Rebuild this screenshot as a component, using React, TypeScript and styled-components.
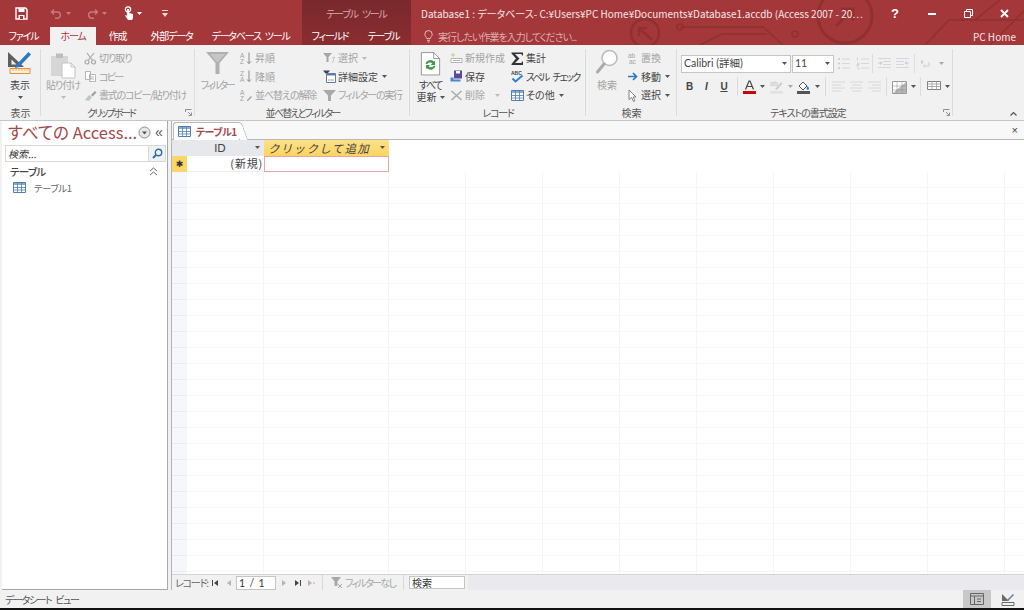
import React from "react";
import styled, { createGlobalStyle } from "styled-components";

const GlobalStyle = createGlobalStyle`
  html, body { margin: 0; padding: 0; background: #f1f1f1; }
  body {
    font-family: "Noto Sans CJK JP", "Noto Sans", sans-serif;
    font-feature-settings: "palt";
  }
`;

const Page = styled.div`
  width: 1024px;
  height: 610px;
  display: flex;
  flex-direction: column;
  overflow: hidden;
  background: #f1f1f1;
`;

/* ---------- title bar ---------- */

const TitleBar = styled.header`
  position: relative;
  height: 45px;
  flex: none;
  display: flex;
  background: #a4373a;
  color: #fff;
  overflow: hidden;
`;

const TitleArt = styled.svg`
  position: absolute;
  left: 0;
  top: 0;
  pointer-events: none;
`;

const TitleLeft = styled.div`
  position: relative;
  width: 302px;
  flex: none;
  display: flex;
  flex-direction: column;
`;

const Qat = styled.div`
  height: 27px;
  display: flex;
  align-items: center;
  padding-left: 15px;
`;

const QatSlot = styled.div<{ $w: number }>`
  width: ${(p) => p.$w}px;
  display: flex;
  align-items: center;
`;

const TabRow = styled.nav`
  height: 18px;
  display: flex;
`;

const Tab = styled.div<{ $w: number; $active?: boolean }>`
  width: ${(p) => p.$w}px;
  display: flex;
  align-items: center;
  justify-content: center;
  font-size: 10px;
  letter-spacing: -1.2px;
  word-spacing: 3px;
  line-height: 1;
  white-space: nowrap;
  color: ${(p) => (p.$active ? "#a4373a" : "#fff")};
  background: ${(p) => (p.$active ? "#f1f1f1" : "transparent")};
`;

const ContextGroup = styled.div`
  position: relative;
  width: 109px;
  flex: none;
  display: flex;
  flex-direction: column;
  background: linear-gradient(#79292c, #8a2d30);
`;

const ContextTitle = styled.div`
  height: 27px;
  display: flex;
  align-items: center;
  justify-content: center;
  font-size: 10px;
  letter-spacing: -1.2px;
  word-spacing: 3px;
  color: #dba9aa;
`;

const ContextTabs = styled.div`
  height: 18px;
  display: flex;
  padding-left: 2px;
`;

const TitleRight = styled.div`
  position: relative;
  flex: 1;
  min-width: 0;
  display: flex;
  flex-direction: column;
`;

const CaptionRow = styled.div`
  height: 27px;
  display: flex;
  align-items: center;
  padding-left: 10px;
`;

const Caption = styled.div`
  width: 456px;
  flex: none;
  font-size: 10px;
  white-space: nowrap;
  color: #f6e6e6;
`;

const WindowButton = styled.div<{ $w: number }>`
  width: ${(p) => p.$w}px;
  flex: none;
  display: flex;
  justify-content: center;
  align-items: center;
`;

const TellRow = styled.div`
  height: 18px;
  display: flex;
  align-items: center;
  justify-content: space-between;
  padding: 0 8px 0 13px;
`;

const TellMe = styled.div`
  display: flex;
  align-items: center;
  gap: 5px;
  font-size: 10px;
  letter-spacing: -1px;
  color: #dcaeaf;
`;

const Account = styled.div`
  font-size: 10px;
  color: #f6e6e6;
`;

/* ---------- ribbon ---------- */

const Ribbon = styled.section`
  height: 76px;
  flex: none;
  display: flex;
  background: #f1f1f1;
  border-bottom: 1px solid #c6c6c6;
  box-sizing: border-box;
  color: #444;
  font-size: 10px;
  line-height: 1;
`;

const Group = styled.div<{ $w: number }>`
  position: relative;
  width: ${(p) => p.$w}px;
  flex: none;
  display: flex;
  flex-direction: column;
  box-sizing: border-box;
  padding-top: 4px;
  &::after {
    content: "";
    position: absolute;
    right: 0;
    top: 4px;
    bottom: 4px;
    width: 1px;
    background: #dcdcdc;
  }
`;

const GroupBody = styled.div<{ $pad?: number }>`
  height: 56px;
  display: flex;
  padding-left: ${(p) => p.$pad ?? 0}px;
`;

const GroupLabel = styled.div<{ $ls?: number; $pr?: number }>`
  height: 15px;
  display: flex;
  align-items: center;
  justify-content: center;
  padding-right: ${(p) => p.$pr ?? 0}px;
  font-size: 10px;
  letter-spacing: ${(p) => p.$ls ?? 0}px;
  color: #555;
`;

const Launcher = styled.svg`
  position: absolute;
  right: 3px;
  bottom: 4px;
`;

const BigButton = styled.div<{ $w: number; $off?: boolean }>`
  width: ${(p) => p.$w}px;
  flex: none;
  display: flex;
  flex-direction: column;
  align-items: center;
  color: ${(p) => (p.$off ? "#a3a3a3" : "#444")};
  white-space: nowrap;
`;

const BigIcon = styled.div<{ $top?: number }>`
  height: 30px;
  box-sizing: border-box;
  padding-top: ${(p) => p.$top ?? 0}px;
  display: flex;
  align-items: flex-start;
  justify-content: center;
`;

const BigText = styled.div<{ $ls?: number }>`
  height: 12px;
  display: flex;
  align-items: center;
  justify-content: center;
  gap: 3px;
  font-size: 10px;
  letter-spacing: ${(p) => p.$ls ?? 0}px;
  white-space: nowrap;
`;

const Column = styled.div<{ $w?: number; $ml?: number }>`
  width: ${(p) => (p.$w ? `${p.$w}px` : "auto")};
  margin-left: ${(p) => p.$ml ?? 0}px;
  flex: none;
  display: flex;
  flex-direction: column;
`;

const SmallRow = styled.div<{ $off?: boolean }>`
  height: 18.5px;
  display: flex;
  align-items: center;
  gap: 2px;
  white-space: nowrap;
  font-size: 10px;
  color: ${(p) => (p.$off ? "#a3a3a3" : "#444")};
`;

const RowText = styled.span<{ $ls?: number }>`
  letter-spacing: ${(p) => p.$ls ?? 0}px;
  word-spacing: 3px;
  margin-right: 2px;
`;

const TextTools = styled.div`
  display: flex;
  flex-direction: column;
  padding: 5px 0 0 4px;
`;

const ToolRow = styled.div<{ $h: number }>`
  height: ${(p) => p.$h}px;
  display: flex;
  align-items: center;
`;

const Combo = styled.div<{ $w: number; $ml?: number }>`
  width: ${(p) => p.$w}px;
  margin-left: ${(p) => p.$ml ?? 0}px;
  height: 18px;
  box-sizing: border-box;
  display: flex;
  align-items: center;
  justify-content: space-between;
  padding: 0 3px 0 2px;
  background: #fff;
  border: 1px solid #c4c4c4;
  font-family: Lato, "Noto Sans CJK JP", sans-serif;
  font-size: 10.5px;
  color: #444;
`;

const Tool = styled.div<{ $w: number; $off?: boolean }>`
  width: ${(p) => p.$w}px;
  flex: none;
  display: flex;
  align-items: center;
  justify-content: center;
  opacity: ${(p) => (p.$off ? 0.45 : 1)};
`;

const FormatLetter = styled.span<{ $i?: boolean; $u?: boolean }>`
  font-family: "Liberation Sans", sans-serif;
  font-size: 10px;
  font-weight: 700;
  font-style: ${(p) => (p.$i ? "italic" : "normal")};
  text-decoration: ${(p) => (p.$u ? "underline" : "none")};
  color: #444;
`;

const ToolSep = styled.div<{ $l: number; $r: number }>`
  width: 1px;
  height: 19px;
  flex: none;
  margin: 0 ${(p) => p.$r}px 0 ${(p) => p.$l}px;
  background: #dcdcdc;
`;

const CollapseSlot = styled.div`
  flex: 1;
  display: flex;
  align-items: flex-end;
  justify-content: flex-end;
  padding: 0 7px 4px 0;
`;

/* ---------- workspace ---------- */

const Workspace = styled.main`
  flex: 1;
  min-height: 0;
  display: flex;
`;

const NavPane = styled.aside`
  width: 166px;
  margin-left: 2px;
  flex: none;
  box-sizing: border-box;
  background: #fff;
  border-right: 1px solid #a8a8a8;
  border-bottom: 1px solid #a8a8a8;
  display: flex;
  flex-direction: column;
`;

const NavHeader = styled.div`
  height: 24px;
  display: flex;
  align-items: center;
  padding: 0 0 2px 6px;
  box-sizing: border-box;
  flex: none;
`;

const NavTitle = styled.div`
  width: 130px;
  flex: none;
  font-size: 16.5px;
  color: #a4474a;
  white-space: nowrap;
`;

const NavChevrons = styled.div`
  margin-left: 4px;
  font-family: "Liberation Sans", sans-serif;
  font-size: 14px;
  line-height: 1;
  color: #555;
`;

const NavSearch = styled.div`
  height: 17px;
  margin: 0 1px 0 3px;
  flex: none;
  box-sizing: border-box;
  display: flex;
  align-items: center;
  justify-content: space-between;
  border: 1px solid #d8d8d8;
  font-size: 10px;
  font-style: italic;
  color: #333;
  padding-left: 2px;
`;

const NavSearchButton = styled.div`
  width: 16px;
  height: 15px;
  display: flex;
  align-items: center;
  justify-content: center;
  background: #eef1f5;
  border-left: 1px solid #d8d8d8;
`;

const NavSection = styled.div`
  height: 16px;
  margin-top: 1px;
  padding: 0 9px 0 8px;
  display: flex;
  align-items: center;
  justify-content: space-between;
  font-size: 10.5px;
  font-weight: 500;
  letter-spacing: -0.7px;
  color: #444;
`;

const NavItem = styled.div`
  height: 17px;
  padding-left: 11px;
  display: flex;
  align-items: center;
  gap: 8px;
  font-size: 9.5px;
  letter-spacing: -0.5px;
  color: #666;
`;

const Splitter = styled.div`
  width: 4px;
  flex: none;
  box-sizing: border-box;
  background: #f1f1f1;
  border-right: 1px solid #b4b4b4;
`;

const Document = styled.div`
  flex: 1;
  min-width: 0;
  display: flex;
  flex-direction: column;
  background: #fff;
`;

const DocTabs = styled.div`
  height: 19px;
  flex: none;
  box-sizing: border-box;
  display: flex;
  align-items: flex-end;
  justify-content: space-between;
  background: #f8f8f8;
  border-bottom: 1px solid #b9b9b9;
  padding-right: 6px;
`;

const DocTab = styled.div`
  position: relative;
  width: 66px;
  height: 18px;
  margin: 0 0 -1px 1px;
  padding-left: 4px;
  box-sizing: border-box;
  display: flex;
  align-items: center;
  gap: 5px;
  background: #fff;
  border: 1px solid #b9b9b9;
  border-bottom: none;
  border-right: none;
  border-radius: 3px 0 0 0;
  font-size: 10px;
  font-weight: 700;
  letter-spacing: -0.5px;
  color: #a4474a;
  &::after {
    content: "";
    position: absolute;
    right: -6px;
    top: -1px;
    width: 8px;
    height: 18px;
    background: #fff;
    border-right: 1px solid #b9b9b9;
    border-top: 1px solid #b9b9b9;
    border-radius: 0 4px 0 0;
    transform: skewX(20deg);
    box-sizing: border-box;
  }
`;

const DocClose = styled.div`
  align-self: center;
  font-family: "Liberation Sans", sans-serif;
  font-size: 11px;
  line-height: 1;
  color: #444;
`;

const Sheet = styled.div`
  flex: 1;
  min-height: 0;
  display: flex;
  flex-direction: column;
  font-size: 11px;
`;

const SheetRow = styled.div`
  height: 16px;
  flex: none;
  display: flex;
`;

const Selector = styled.div<{ $tone: "corner" | "new" }>`
  width: 15px;
  flex: none;
  display: flex;
  align-items: center;
  justify-content: center;
  box-sizing: border-box;
  font-family: "DejaVu Sans", sans-serif;
  font-size: 9px;
  color: #333;
  background: ${(p) => (p.$tone === "new" ? "#fbd565" : "#e6e8ec")};
`;

const HeaderCell = styled.div<{ $w: number; $add?: boolean }>`
  width: ${(p) => p.$w}px;
  flex: none;
  box-sizing: border-box;
  display: flex;
  align-items: center;
  justify-content: space-between;
  padding: 0 4px 1px;
  background: ${(p) =>
    p.$add ? "linear-gradient(#fde08a, #fcd460)" : "#e6e8ec"};
  font-style: ${(p) => (p.$add ? "italic" : "normal")};
  color: #444;
`;

const HeaderText = styled.span<{ $add?: boolean }>`
  flex: 1;
  text-align: ${(p) => (p.$add ? "left" : "center")};
  padding-right: ${(p) => (p.$add ? 0 : 6)}px;
  font-size: ${(p) => (p.$add ? 11.5 : 11)}px;
  letter-spacing: ${(p) => (p.$add ? "1.3px" : "0")};
  font-feature-settings: normal;
  font-family: ${(p) =>
    p.$add ? '"Noto Sans CJK JP", sans-serif' : "Lato, sans-serif"};
`;

const ValueCell = styled.div<{ $w: number }>`
  width: ${(p) => p.$w}px;
  flex: none;
  box-sizing: border-box;
  display: flex;
  align-items: center;
  justify-content: flex-end;
  padding: 0 1px 2px 0;
  color: #444;
  letter-spacing: 0.8px;
  border-bottom: 1px solid #eceff3;
`;

const ActiveCell = styled.div<{ $w: number }>`
  width: ${(p) => p.$w}px;
  flex: none;
  box-sizing: border-box;
  background: #fff;
  border: 1px solid #e3a5a7;
`;

const SheetRest = styled.div`
  flex: 1;
  min-height: 0;
  display: flex;
`;

const SelectorRest = styled.div`
  width: 15px;
  flex: none;
  background: #f5f7fa
    repeating-linear-gradient(#0000 0 15px, #e8ebef 15px 16px);
`;

/* empty columns: the faint row lines are a repeating pattern */
const ColumnRest = styled.div<{ $w: number }>`
  width: ${(p) => p.$w}px;
  flex: none;
  box-sizing: border-box;
  border-right: 1px solid #f5f5f7;
  background: repeating-linear-gradient(#0000 0 15px, #f6f6f8 15px 16px);
`;

const FillerRest = styled.div`
  flex: 1;
  background-image: repeating-linear-gradient(
      #0000 0 15px,
      #f6f6f8 15px 16px
    ),
    repeating-linear-gradient(90deg, #0000 0 76px, #f5f5f7 76px 77px);
`;

const RecordBar = styled.div`
  height: 15px;
  flex: none;
  display: flex;
  align-items: center;
  background: #f1f1f1;
  border-top: 1px solid #d4d4d4;
  box-sizing: content-box;
  font-size: 10px;
  color: #666;
  padding-left: 3px;
  margin-top: -1px;
`;

const RecordLabel = styled.span`
  width: 33px;
  flex: none;
  letter-spacing: -1.2px;
  white-space: nowrap;
`;

const PagerButton = styled.div<{ $w: number; $off?: boolean }>`
  width: ${(p) => p.$w}px;
  flex: none;
  display: flex;
  justify-content: center;
  color: ${(p) => (p.$off ? "#b5b5b5" : "#444")};
`;

const PageInput = styled.div`
  width: 40px;
  height: 14px;
  flex: none;
  box-sizing: border-box;
  background: #fff;
  border: 1px solid #c4c4c4;
  display: flex;
  align-items: center;
  padding-left: 2px;
  font-family: Lato, sans-serif;
  font-size: 10.5px;
  letter-spacing: 0.8px;
  color: #333;
`;

const BarSep = styled.div<{ $l: number; $r: number }>`
  width: 1px;
  height: 15px;
  flex: none;
  margin: 0 ${(p) => p.$r}px 0 ${(p) => p.$l}px;
  background: #d8d8d8;
`;

const NoFilter = styled.div`
  width: 71px;
  flex: none;
  display: flex;
  align-items: center;
  gap: 1px;
  letter-spacing: -1.7px;
  color: #a6a6a6;
  white-space: nowrap;
`;

const BarSearch = styled.div`
  width: 56px;
  height: 13px;
  flex: none;
  box-sizing: border-box;
  padding-left: 2px;
  background: #fff;
  border: 1px solid #c4c4c4;
  display: flex;
  align-items: center;
  color: #333;
`;

const Track = styled.div`
  flex: 1;
  height: 15px;
  margin-left: 3px;
  background: #e9e9ee;
`;

const StatusBar = styled.footer`
  height: 18px;
  flex: none;
  display: flex;
  align-items: center;
  justify-content: space-between;
  padding-left: 5px;
  background: #f1f1f1;
  font-size: 10px;
  letter-spacing: -1.4px;
  word-spacing: 3px;
  color: #555;
`;

const ViewButtons = styled.div`
  display: flex;
  height: 100%;
`;

const ViewButton = styled.div<{ $w: number; $on?: boolean }>`
  width: ${(p) => p.$w}px;
  display: flex;
  align-items: center;
  justify-content: center;
  background: ${(p) => (p.$on ? "#c8c8c8" : "transparent")};
`;

const BottomEdge = styled.div`
  height: 2px;
  flex: none;
  background: #111;
`;

/* ---------- icons ---------- */

const Caret = ({ c = "#555", s = 5 }: { c?: string; s?: number }) => (
  <svg width={s} height={s - 2} viewBox="0 0 5 3" style={{ flex: "none" }}>
    <path d="M0 0h5L2.5 3z" fill={c} />
  </svg>
);

const Glyph = ({ w = 13, h = 13, children }: { w?: number; h?: number; children: React.ReactNode }) => (
  <svg width={w} height={h} viewBox={`0 0 ${w} ${h}`} style={{ flex: "none" }}>
    {children}
  </svg>
);

const SaveIcon = () => (
  <Glyph>
    <path d="M1 1h9.5L12 2.5V12H1z" fill="none" stroke="#fff" strokeWidth="1.4" />
    <path d="M3.5 1.500h6V5h-6zM3.500 8h6v4h-6z" fill="#fff" />
    <path d="M5 9h3v3H5z" fill="#a4373a" />
  </Glyph>
);

const UndoIcon = ({ flip }: { flip?: boolean }) => (
  <svg width="13" height="11" viewBox="0 0 13 11" style={flip ? { transform: "scaleX(-1)" } : undefined}>
    <path d="M4 1.5 1.5 4 4 6.5M2 4h6a3.2 3.2 0 0 1 0 6.2H5" fill="none" stroke="#c67b7d" strokeWidth="1.4" />
  </svg>
);

const TouchIcon = () => (
  <svg width="12" height="15" viewBox="0 0 12 15">
    <circle cx="5" cy="3.4" r="2.6" fill="none" stroke="#fff" strokeWidth="1.3" />
    <path d="M4 3h2v4l4 1v4l-1 2H5L2 9.5 3 9l1 1z" fill="#fff" />
  </svg>
);

const CustomizeIcon = () => (
  <svg width="6" height="7" viewBox="0 0 6 7">
    <path d="M0 0h6v1H0zM0 3h6L3 7z" fill="#f2d5d5" />
  </svg>
);

const BulbIcon = () => (
  <svg width="9" height="13" viewBox="0 0 9 13">
    <path d="M2.8 8.5C2.5 7 .8 6.3.8 4.300a3.700 3.700 0 0 1 7.400 0c0 2-1.700 2.700-2 4.200z" fill="none" stroke="#e4bcbd" strokeWidth="1" />
    <path d="M3 10.300h3M3.500 12h2" stroke="#e4bcbd" strokeWidth="1" />
  </svg>
);

const HelpMark = styled.span`
  font-family: "Liberation Sans", sans-serif;
  font-size: 13px;
  font-weight: 700;
  color: #fff;
`;

const MinIcon = () => (
  <svg width="8" height="2" viewBox="0 0 8 2">
    <path d="M0 0h8v2H0z" fill="#fff" />
  </svg>
);

const RestoreIcon = () => (
  <svg width="9" height="9" viewBox="0 0 9 9">
    <path d="M.5 2.500h6v6h-6zM2.500 2.500v-2h6v6h-2" fill="none" stroke="#fff" strokeWidth="1" />
  </svg>
);

const CloseIcon = () => (
  <svg width="9" height="9" viewBox="0 0 9 9">
    <path d="m1 1 7 7M8 1 1 8" fill="none" stroke="#fff" strokeWidth="1.8" />
  </svg>
);

const ViewIcon = () => (
  <svg width="26" height="27" viewBox="0 0 26 27">
    <path d="M1 3 17 18H1z" fill="#5f5f5f" />
    <path d="M4.500 10.500v5h5z" fill="#f1f1f1" />
    <path d="M9 16 21.500 3 24 5.500 12 18l-4 1z" fill="#2b79c2" />
    <path d="M3 19.500h20v5H3z" fill="#fbeedb" stroke="#e1903a" strokeWidth="1" />
    <path d="M6 20v2M9 20v2M12 20v2M15 20v2M18 20v2M21 20v2" stroke="#e1903a" strokeWidth=".7" />
  </svg>
);

const PasteIcon = () => (
  <svg width="26" height="27" viewBox="0 0 26 27">
    <path d="M1 4h17v20H1z" fill="#d6d6d6" />
    <path d="M6 1.500h7V6H6z" fill="#bdbdbd" />
    <path d="M12 11h9l4 4v11H12z" fill="#fff" stroke="#c4c4c4" />
    <path d="M21 11v4h4" fill="none" stroke="#c4c4c4" />
  </svg>
);

const CutIcon = () => (
  <Glyph>
    <circle cx="3" cy="10" r="2" fill="none" stroke="#a9a9a9" strokeWidth="1.2" />
    <circle cx="9.500" cy="10" r="2" fill="none" stroke="#a9a9a9" strokeWidth="1.2" />
    <path d="M4 8.500 10 1M8.500 8.500 3 1" stroke="#a9a9a9" strokeWidth="1.2" />
  </Glyph>
);

const CopyIcon = () => (
  <Glyph>
    <path d="M1.500 1.500h5v8h-5zM5.500 4.500h6v7h-6z" fill="#fff" stroke="#b5b5b5" />
    <path d="M7 7h3M7 9h3" stroke="#b5b5b5" />
  </Glyph>
);

const BrushIcon = () => (
  <Glyph>
    <path d="M1 11 5 6l3 2-3 4z" fill="#c4c4c4" />
    <path d="m7 6 4-4 1.500 1.500-4 4z" fill="#9e9e9e" />
  </Glyph>
);

const FunnelIcon = ({ c = "#a9a9a9" }: { c?: string }) => (
  <svg width="13" height="13" viewBox="0 0 13 13" style={{ flex: "none" }}>
    <path d="M0 1h13L8 6.500V12H5V6.500z" fill={c} />
  </svg>
);

const BigFunnelIcon = () => (
  <svg width="23" height="22" viewBox="0 0 23 22">
    <path d="M0 0h23L13.500 11v11h-4V11z" fill="#b0b0b0" />
    <path d="M4 2h15l-7 8h-1z" fill="#c6c6c6" />
  </svg>
);

const SortIcon = ({ down }: { down?: boolean }) => (
  <Glyph>
    <text x="0" y="5.500" fontSize="6.500" fontFamily="Liberation Sans" fill="#a3a3a3">{down ? "Z" : "A"}</text>
    <text x="0" y="12" fontSize="6.500" fontFamily="Liberation Sans" fill="#a3a3a3">{down ? "A" : "Z"}</text>
    <path d="M9 .5v11M7 9.500l2 2 2-2" fill="none" stroke="#8a8a8a" />
  </Glyph>
);

const ClearSortIcon = () => (
  <Glyph>
    <text x="0" y="5.500" fontSize="6.500" fontFamily="Liberation Sans" fill="#a3a3a3">A</text>
    <text x="0" y="12" fontSize="6.500" fontFamily="Liberation Sans" fill="#a3a3a3">Z</text>
    <path d="m7 11 4-4 1 1-4 4H7z" fill="#a3a3a3" />
  </Glyph>
);

const SelectionFilterIcon = () => (
  <Glyph>
    <path d="M0 1h9L5.500 5v5h-2V5z" fill="#a6a6a6" />
    <path d="m9 6 2.500-1-2 6" fill="none" stroke="#c8c8c8" />
  </Glyph>
);

const AdvancedIcon = () => (
  <Glyph>
    <path d="M0 .5h7L4.500 3.500h-2z" fill="#444" />
    <path d="M3.500 3.500h9v9h-9z" fill="#fff" stroke="#5c7ea8" />
    <path d="M3.500 3.500h9v2h-9z" fill="#5c7ea8" />
    <path d="M5.500 10h1M7.500 10h1M9.500 10h1" stroke="#444" />
  </Glyph>
);

const RefreshIcon = () => (
  <svg width="21" height="26" viewBox="0 0 23 28">
    <path d="M1.500 1.500H15L21.500 8v18h-20z" fill="#fff" stroke="#8f8f8f" />
    <path d="M15 1.500V8h6.500" fill="none" stroke="#8f8f8f" />
    <path d="M6 14a5.500 5.500 0 0 1 9.500-2.500l1-1.500v5h-5l2-1.500A3.500 3.500 0 0 0 8 14z" fill="#3f9a4c" />
    <path d="M17 16a5.500 5.500 0 0 1-9.500 2.500l-1 1.500v-5h5l-2 1.500A3.500 3.500 0 0 0 15 16z" fill="#3f9a4c" />
  </svg>
);

const NewRecordIcon = () => (
  <Glyph>
    <path d="M1 6.500h11v4H1z" fill="#fff" stroke="#b5b5b5" />
    <path d="M3 8.500h7" stroke="#b5b5b5" />
    <path d="M3 1v4M1 3h4" stroke="#d9c08a" />
  </Glyph>
);

const SaveRecordIcon = () => (
  <Glyph>
    <path d="M4 .5h8v8H4z" fill="#5b4a9e" />
    <path d="M6 1h4v2.500H6z" fill="#fff" />
    <path d="M.5 7.500h3v2h7v2H.5z" fill="#4a88c9" />
  </Glyph>
);

const DeleteIcon = () => (
  <Glyph>
    <path d="m1.500 2 10 9M11.500 2l-10 9" stroke="#a9a9a9" strokeWidth="1.5" />
  </Glyph>
);

const SigmaIcon = () => (
  <Glyph>
    <path d="M.5.500H12v3h-1L10.500 2H4l4.500 4.500L4 11h6.500l.5-1.500h1V13H.500V12L5 6.500.500 1.500z" fill="#333" />
  </Glyph>
);

const SpellIcon = () => (
  <Glyph>
    <text x="0" y="4.800" fontSize="5" fontWeight="700" fontFamily="Liberation Sans" fill="#444">ABC</text>
    <path d="m1.500 8.500 3 3 7-6" fill="none" stroke="#2f7fca" strokeWidth="2" />
  </Glyph>
);

const TableIcon = ({ c = "#4f7fb3" }: { c?: string }) => (
  <Glyph>
    <path d="M.5 1.500h12v10H.5z" fill="#fff" stroke={c} />
    <path d="M.5 1.500h12V4H.5z" fill={c} opacity=".65" />
    <path d="M.5 6.500h12M.5 9h12M4.500 1.500v10M8.500 1.500v10" stroke={c} strokeWidth=".8" />
  </Glyph>
);

const MagnifierIcon = () => (
  <svg width="22" height="26" viewBox="0 0 22 26">
    <circle cx="13.500" cy="9" r="7.500" fill="#fdfdfd" stroke="#b9b9b9" strokeWidth="1.5" />
    <path d="M8 15 1.500 23" stroke="#ababab" strokeWidth="3" strokeLinecap="round" />
  </svg>
);

const ReplaceIcon = () => (
  <Glyph>
    <text x="2" y="5.500" fontSize="6.500" fontFamily="Liberation Sans" fill="#a3a3a3">ab</text>
    <text x="3" y="12" fontSize="6.500" fontFamily="Liberation Sans" fill="#a3a3a3">ac</text>
  </Glyph>
);

const GoIcon = () => (
  <Glyph>
    <path d="M2 6.500h8M7 3l3.500 3.500L7 10" fill="none" stroke="#2b79c2" strokeWidth="1.7" />
  </Glyph>
);

const CursorIcon = () => (
  <Glyph>
    <path d="M3 1v9.500l2.500-2 2 4 1.500-.8-2-3.700h3z" fill="#fff" stroke="#666" strokeWidth=".8" />
  </Glyph>
);

const BulletsIcon = () => (
  <Glyph>
    <path d="M1 2h2M1 6.500h2M1 11h2" stroke="#9b9b9b" strokeWidth="1.6" />
    <path d="M5 2h8M5 6.500h8M5 11h8" stroke="#b8b8b8" />
  </Glyph>
);

const NumberingIcon = () => (
  <Glyph>
    <path d="M1.500.5v3M1 6h2v1.500H1V9h2M1 11h2v1.500" fill="none" stroke="#9b9b9b" strokeWidth=".8" />
    <path d="M5 2h8M5 6.500h8M5 11h8" stroke="#b8b8b8" />
  </Glyph>
);

const IndentIcon = ({ flip }: { flip?: boolean }) => (
  <svg width="13" height="11" viewBox="0 0 13 11" style={flip ? { transform: "scaleX(-1)" } : undefined}>
    <path d="M0 .5h13M5 3.500h8M5 6.500h8M0 9.500h13" stroke="#b8b8b8" />
    <path d="M0 5h3M2 3.500 4 5 2 6.500" fill="none" stroke="#7fa3c9" />
  </svg>
);

const RtlIcon = () => (
  <svg width="10" height="10" viewBox="0 0 10 10">
    <path d="M1 .5 4 3 1 5.500z" fill="#a8a8a8" />
    <path d="M9 3v4H3.500M5 5.500 3.500 7 5 8.500" fill="none" stroke="#a8a8a8" />
  </svg>
);

const FontColorIcon = () => (
  <svg width="13" height="14" viewBox="0 0 13 14">
    <path d="M2.500 9.500 6 1h1l3.500 8.500M4 6.500h5" fill="none" stroke="#444" strokeWidth="1.2" />
    <path d="M0 11h13v3H0z" fill="#c00" />
  </svg>
);

const HighlightIcon = () => (
  <svg width="13" height="14" viewBox="0 0 13 14">
    <text x="0" y="6" fontSize="7" fontFamily="Liberation Sans" fill="#8a8a8a">ab</text>
    <path d="m5 9 6-7 1.500 1.500L7 10z" fill="#a8a8a8" />
    <path d="M0 11h13v2.500H0z" fill="#cfcfcf" />
  </svg>
);

const FillIcon = () => (
  <svg width="13" height="14" viewBox="0 0 13 14">
    <path d="m2 6 4-4 4 4-4 4z" fill="#fff" stroke="#555" />
    <path d="M10.500 6c1 1.200 1.500 2 1.500 2.600a1.200 1.200 0 0 1-2.400 0c0-.6.400-1.400.900-2.600z" fill="#2b79c2" />
    <path d="M0 11h13v3H0z" fill="#555" />
  </svg>
);

const AlignIcon = ({ kind }: { kind: "l" | "c" | "r" }) => {
  const x = kind === "l" ? 0 : kind === "c" ? 2 : 4;
  return (
    <Glyph h={11}>
      <path d={`M0 1h13M${x} 4h9M0 7h13M${x} 10h9`} stroke="#bcbcbc" />
    </Glyph>
  );
};

const AltFillIcon = () => (
  <Glyph w={15} h={14}>
    <path d="M.5 1.500h14v12H.5z" fill="#fff" stroke="#9b9b9b" />
    <path d="M1 13 14 2v11z" fill="#b8b8b8" />
    <path d="M5 2v11M10 2v11M1 6h13M1 10h13" stroke="#8a8a8a" strokeWidth=".5" />
  </Glyph>
);

const GridLinesIcon = () => (
  <Glyph w={14} h={11}>
    <path d="M.5.500h13v8H.5z" fill="#fff" stroke="#808080" />
    <path d="M.5 3h13M.5 5.500h13M5 .5v8M9.500.5v8" stroke="#9a9a9a" strokeWidth=".8" />
  </Glyph>
);

const LauncherIcon = () => (
  <Launcher width="7" height="7" viewBox="0 0 7 7">
    <path d="M.5 3V.5h6M3 3l3 3M6.500 3.500v3h-3" fill="none" stroke="#777" strokeWidth=".8" />
  </Launcher>
);

const SearchGlass = () => (
  <svg width="11" height="11" viewBox="0 0 11 11">
    <circle cx="6.500" cy="4.500" r="3.200" fill="none" stroke="#2e6da4" strokeWidth="1.4" />
    <path d="M4 7 1 10" stroke="#2e6da4" strokeWidth="1.8" />
  </svg>
);

const ChevronUp = () => (
  <svg width="9" height="9" viewBox="0 0 9 9">
    <path d="m1 4 3.500-3L8 4M1 8l3.500-3L8 8" fill="none" stroke="#666" />
  </svg>
);

const NavMenuButton = () => (
  <svg width="13" height="13" viewBox="0 0 13 13" style={{ flex: "none" }}>
    <circle cx="6.500" cy="6.500" r="5.500" fill="#e8e8e8" stroke="#8e8e8e" />
    <path d="M4 5.500h5L6.500 8.500z" fill="#555" />
  </svg>
);

const PagerIcon = ({ kind }: { kind: "first" | "prev" | "next" | "last" | "new" }) => {
  const paths: Record<string, string> = {
    first: "M1 1h1v6H1zM7 1v6L3 4z",
    prev: "M6 1v6L2 4z",
    next: "M2 1v6l4-3z",
    last: "M1 1v6l4-3zM6 1h1v6H6z",
    new: "M1 1v6l4-3z",
  };
  return (
    <svg width="8" height="8" viewBox="0 0 8 8">
      <path d={paths[kind]} fill="currentColor" />
      {kind === "new" && <path d="M6 3h2v2H6z" fill="#e6cf8c" />}
    </svg>
  );
};

const NoFilterIcon = () => (
  <svg width="13" height="13" viewBox="0 0 13 13" style={{ flex: "none" }}>
    <path d="M0 1h10L6.500 5.500V10h-3V5.500z" fill="#a9a9a9" />
    <path d="m7 8 4 4M11 8l-4 4" stroke="#a9a9a9" />
  </svg>
);

const SheetViewIcon = () => (
  <svg width="14" height="12" viewBox="0 0 14 12">
    <path d="M.5.500h13v11H.5z" fill="none" stroke="#666" />
    <path d="M.5 3h13M4.500 3v8.500M7 6h4M7 8.500h4" stroke="#666" />
  </svg>
);

const DesignViewIcon = () => (
  <svg width="14" height="13" viewBox="0 0 14 13">
    <path d="M1 1 8 8H1z" fill="#6a6a6a" />
    <path d="m6 7 6-6 1 1-6 6z" fill="#5c7ea8" />
    <path d="M1 9.500h12v3H1z" fill="none" stroke="#6a6a6a" />
  </svg>
);

const TitleDecoration = () => (
  <TitleArt width="1024" height="45" viewBox="0 0 1024 45">
    <g fill="none" stroke="#8f3033" strokeWidth="2.5">
      <circle cx="645" cy="33" r="14" />
      <path d="M652 40 639 28M639 36v-8h8" />
      <circle cx="845" cy="16" r="27" strokeWidth="3" />
      <path d="M836 26 852 10M841 9h12v12" strokeWidth="3" />
      <path d="M680 27h83l20 18M700 45l22-11h45" strokeWidth="1.5" />
      <circle cx="680" cy="27" r="3" strokeWidth="1.5" />
      <circle cx="795" cy="34" r="3" strokeWidth="1.5" />
      <path d="m925 45 24-25h75M990 45l34-34M1000 0l-25 20" strokeWidth="1.5" />
    </g>
  </TitleArt>
);

/* ---------- page ---------- */

export default function App() {
  return (
    <Page>
      <GlobalStyle />
      <TitleBar>
        <TitleDecoration />
        <TitleLeft>
          <Qat>
            <QatSlot $w={35}><SaveIcon /></QatSlot>
            <QatSlot $w={16}><UndoIcon /></QatSlot>
            <QatSlot $w={20}><Caret c="#c67b7d" /></QatSlot>
            <QatSlot $w={16}><UndoIcon flip /></QatSlot>
            <QatSlot $w={21}><Caret c="#c67b7d" /></QatSlot>
            <QatSlot $w={14}><TouchIcon /></QatSlot>
            <QatSlot $w={25}><Caret c="#fff" /></QatSlot>
            <QatSlot $w={6}><CustomizeIcon /></QatSlot>
          </Qat>
          <TabRow>
            <Tab $w={47}>ファイル</Tab>
            <Tab $w={3} />
            <Tab $w={46} $active>ホーム</Tab>
            <Tab $w={43}>作成</Tab>
            <Tab $w={65}>外部データ</Tab>
            <Tab $w={93}>データベース ツール</Tab>
          </TabRow>
        </TitleLeft>
        <ContextGroup>
          <ContextTitle>テーブル ツール</ContextTitle>
          <ContextTabs>
            <Tab $w={52}>フィールド</Tab>
            <Tab $w={55}>テーブル</Tab>
          </ContextTabs>
        </ContextGroup>
        <TitleRight>
          <CaptionRow>
            <Caption>Database1 : データベース- C:¥Users¥PC Home¥Documents¥Database1.accdb (Access 2007 - 20…</Caption>
            <WindowButton $w={36}><HelpMark>?</HelpMark></WindowButton>
            <WindowButton $w={37}><MinIcon /></WindowButton>
            <WindowButton $w={36}><RestoreIcon /></WindowButton>
            <WindowButton $w={37}><CloseIcon /></WindowButton>
          </CaptionRow>
          <TellRow>
            <TellMe><BulbIcon />実行したい作業を入力してください...</TellMe>
            <Account>PC Home</Account>
          </TellRow>
        </TitleRight>
      </TitleBar>

      <Ribbon>
        <Group $w={41}>
          <GroupBody $pad={2}>
            <BigButton $w={36}>
              <BigIcon><ViewIcon /></BigIcon>
              <BigText>表示</BigText>
              <BigText><Caret /></BigText>
            </BigButton>
          </GroupBody>
          <GroupLabel>表示</GroupLabel>
        </Group>

        <Group $w={154}>
          <GroupBody $pad={3}>
            <BigButton $w={38} $off>
              <BigIcon $top={3}><PasteIcon /></BigIcon>
              <BigText $ls={-1}>貼り付け</BigText>
              <BigText><Caret c="#bbb" /></BigText>
            </BigButton>
            <Column $ml={2}>
              <SmallRow $off><CutIcon /><RowText $ls={-1}>切り取り</RowText></SmallRow>
              <SmallRow $off><CopyIcon /><RowText $ls={-1.8}>コピー</RowText></SmallRow>
              <SmallRow $off><BrushIcon /><RowText $ls={-1.2}>書式のコピー/貼り付け</RowText></SmallRow>
            </Column>
          </GroupBody>
          <GroupLabel $ls={-2} $pr={14}>クリップボード</GroupLabel>
          <LauncherIcon />
        </Group>

        <Group $w={215}>
          <GroupBody $pad={4}>
            <BigButton $w={36} $off>
              <BigIcon $top={3}><BigFunnelIcon /></BigIcon>
              <BigText $ls={-2.2}>フィルター</BigText>
            </BigButton>
            <Column $w={83} $ml={5}>
              <SmallRow $off><SortIcon /><RowText>昇順</RowText></SmallRow>
              <SmallRow $off><SortIcon down /><RowText>降順</RowText></SmallRow>
              <SmallRow $off><ClearSortIcon /><RowText $ls={-1.1}>並べ替えの解除</RowText></SmallRow>
            </Column>
            <Column>
              <SmallRow $off><SelectionFilterIcon /><RowText>選択</RowText><Caret c="#bbb" /></SmallRow>
              <SmallRow><AdvancedIcon /><RowText>詳細設定</RowText><Caret /></SmallRow>
              <SmallRow $off><FunnelIcon /><RowText $ls={-1.2}>フィルターの実行</RowText></SmallRow>
            </Column>
          </GroupBody>
          <GroupLabel $ls={-1.8}>並べ替えとフィルター</GroupLabel>
        </Group>

        <Group $w={176}>
          <GroupBody $pad={5}>
            <BigButton $w={31}>
              <BigIcon $top={2}><RefreshIcon /></BigIcon>
              <BigText $ls={-1.5}>すべて</BigText>
              <BigText>更新 <Caret /></BigText>
            </BigButton>
            <Column $w={61} $ml={4}>
              <SmallRow $off><NewRecordIcon /><RowText>新規作成</RowText></SmallRow>
              <SmallRow><SaveRecordIcon /><RowText>保存</RowText></SmallRow>
              <SmallRow $off><DeleteIcon /><RowText>削除</RowText>&nbsp;&nbsp;<Caret c="#bbb" /></SmallRow>
            </Column>
            <Column>
              <SmallRow><SigmaIcon /><RowText>集計</RowText></SmallRow>
              <SmallRow><SpellIcon /><RowText $ls={-1.7}>スペル チェック</RowText></SmallRow>
              <SmallRow><TableIcon /><RowText>その他</RowText><Caret /></SmallRow>
            </Column>
          </GroupBody>
          <GroupLabel $ls={-1.2}>レコード</GroupLabel>
        </Group>

        <Group $w={91}>
          <GroupBody $pad={6}>
            <BigButton $w={30} $off>
              <BigIcon><MagnifierIcon /></BigIcon>
              <BigText>検索</BigText>
            </BigButton>
            <Column $ml={4}>
              <SmallRow $off><ReplaceIcon /><RowText>置換</RowText></SmallRow>
              <SmallRow><GoIcon /><RowText>移動</RowText><Caret /></SmallRow>
              <SmallRow><CursorIcon /><RowText>選択</RowText><Caret /></SmallRow>
            </Column>
          </GroupBody>
          <GroupLabel>検索</GroupLabel>
        </Group>

        <Group $w={276}>
          <GroupBody>
            <TextTools>
              <ToolRow $h={19}>
                <Combo $w={110}>Calibri (詳細)<Caret /></Combo>
                <Combo $w={42} $ml={1}>11<Caret /></Combo>
                <Tool $w={19} $off><BulletsIcon /></Tool>
                <Tool $w={18} $off><NumberingIcon /></Tool>
                <ToolSep $l={1} $r={2} />
                <Tool $w={18} $off><IndentIcon /></Tool>
                <Tool $w={18} $off><IndentIcon flip /></Tool>
                <ToolSep $l={3} $r={3} />
                <Tool $w={14} $off><RtlIcon /></Tool>
                <Tool $w={18} $off><Caret /></Tool>
              </ToolRow>
              <ToolRow $h={27}>
                <Tool $w={17}><FormatLetter>B</FormatLetter></Tool>
                <Tool $w={17}><FormatLetter $i>I</FormatLetter></Tool>
                <Tool $w={18}><FormatLetter $u>U</FormatLetter></Tool>
                <ToolSep $l={4} $r={1} />
                <Tool $w={20}><FontColorIcon /></Tool>
                <Tool $w={6}><Caret /></Tool>
                <Tool $w={22} $off><HighlightIcon /></Tool>
                <Tool $w={6} $off><Caret /></Tool>
                <Tool $w={21}><FillIcon /></Tool>
                <Tool $w={6}><Caret /></Tool>
                <ToolSep $l={5} $r={3} />
                <Tool $w={18} $off><AlignIcon kind="l" /></Tool>
                <Tool $w={18} $off><AlignIcon kind="c" /></Tool>
                <Tool $w={18} $off><AlignIcon kind="r" /></Tool>
                <ToolSep $l={3} $r={5} />
                <Tool $w={15}><AltFillIcon /></Tool>
                <Tool $w={13}><Caret /></Tool>
                <ToolSep $l={0} $r={5} />
                <Tool $w={15}><GridLinesIcon /></Tool>
                <Tool $w={12}><Caret /></Tool>
              </ToolRow>
            </TextTools>
          </GroupBody>
          <GroupLabel $ls={-1} $pr={14}>テキストの書式設定</GroupLabel>
          <LauncherIcon />
        </Group>

        <CollapseSlot>
          <svg width="7" height="4" viewBox="0 0 7 4">
            <path d="m.5 3.500 3-3 3 3" fill="none" stroke="#555" strokeWidth="1.2" />
          </svg>
        </CollapseSlot>
      </Ribbon>

      <Workspace>
        <NavPane>
          <NavHeader>
            <NavTitle>すべての Access...</NavTitle>
            <NavMenuButton />
            <NavChevrons>«</NavChevrons>
          </NavHeader>
          <NavSearch>
            検索...
            <NavSearchButton><SearchGlass /></NavSearchButton>
          </NavSearch>
          <NavSection>テーブル<ChevronUp /></NavSection>
          <NavItem><TableIcon />テーブル1</NavItem>
        </NavPane>
        <Splitter />
        <Document>
          <DocTabs>
            <DocTab><TableIcon />テーブル1</DocTab>
            <DocClose>×</DocClose>
          </DocTabs>
          <Sheet>
            <SheetRow>
              <Selector $tone="corner" />
              <HeaderCell $w={77}>
                <HeaderText>ID</HeaderText>
                <Caret />
              </HeaderCell>
              <HeaderCell $w={125} $add>
                <HeaderText $add>クリックして追加</HeaderText>
                <Caret />
              </HeaderCell>
            </SheetRow>
            <SheetRow>
              <Selector $tone="new">✱</Selector>
              <ValueCell $w={77}>(新規)</ValueCell>
              <ActiveCell $w={125} />
            </SheetRow>
            <SheetRest>
              <SelectorRest />
              <ColumnRest $w={77} />
              <ColumnRest $w={125} />
              <FillerRest />
            </SheetRest>
          </Sheet>
          <RecordBar>
            <RecordLabel>レコード:</RecordLabel>
            <PagerButton $w={14}><PagerIcon kind="first" /></PagerButton>
            <PagerButton $w={14} $off><PagerIcon kind="prev" /></PagerButton>
            <PageInput>1 / 1</PageInput>
            <PagerButton $w={15} $off><PagerIcon kind="next" /></PagerButton>
            <PagerButton $w={14}><PagerIcon kind="last" /></PagerButton>
            <PagerButton $w={12} $off><PagerIcon kind="new" /></PagerButton>
            <BarSep $l={5} $r={8} />
            <NoFilter><NoFilterIcon />フィルターなし</NoFilter>
            <BarSep $l={1} $r={5} />
            <BarSearch>検索</BarSearch>
            <Track />
          </RecordBar>
        </Document>
      </Workspace>

      <StatusBar>
        データシート ビュー
        <ViewButtons>
          <ViewButton $w={28} $on><SheetViewIcon /></ViewButton>
          <ViewButton $w={33}><DesignViewIcon /></ViewButton>
        </ViewButtons>
      </StatusBar>
      <BottomEdge />
    </Page>
  );
}
